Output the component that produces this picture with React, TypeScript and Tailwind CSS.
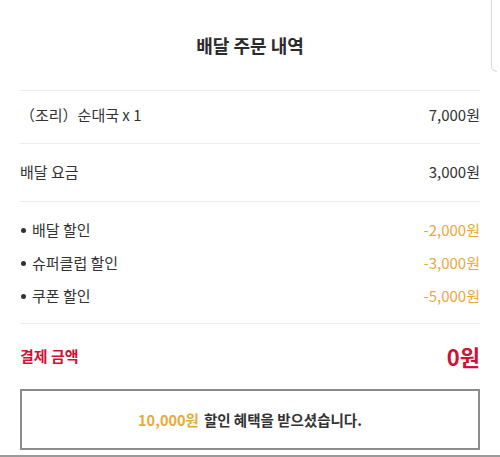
const Divider = () => <div className="h-px bg-[#ececec]" />

const Row = ({ label, value, className }: { label: string; value: string; className: string }) => (
    <div className={`flex items-center justify-between ${className}`}>
        <span>{label}</span>
        <span>{value}</span>
    </div>
)

const discounts = [
    { label: '배달 할인', value: '-2,000원' },
    { label: '슈퍼클럽 할인', value: '-3,000원' },
    { label: '쿠폰 할인', value: '-5,000원' },
]

export default function App() {
    return (
        <div
            className="relative w-[500px] h-[457px] overflow-hidden bg-white text-[#333] text-[15px]"
            style={{ fontFamily: '"Noto Sans CJK KR", "Noto Sans", sans-serif' }}
        >
            <div className="px-5">
                <div className="h-[90px] flex items-center justify-center text-[18px] font-bold text-[#2b2b2b]">
                    배달 주문 내역
                </div>
                <Divider />
                <Row className="h-[52px] pb-[4px]" label="（조리）순대국 x 1" value="7,000원" />
                <Divider />
                <Row className="h-[57px]" label="배달 요금" value="3,000원" />
                <Divider />
                <div className="pt-[12px] pb-[10px]">
                    {discounts.map((d) => (
                        <div key={d.label} className="h-[33px] flex items-center justify-between">
                            <span className="flex items-center gap-[6px]">
                                <span className="w-[5px] h-[5px] rounded-full bg-[#333] ml-px" />
                                {d.label}
                            </span>
                            <span className="text-[#eaa93c]">{d.value}</span>
                        </div>
                    ))}
                </div>
                <Divider />
                <div className="h-[65px] flex items-center justify-between text-[#cf1136] font-bold">
                    <span className="text-[15px]">결제 금액</span>
                    <span className="text-[22px]">0원</span>
                </div>
                <div className="h-[61px] border-2 border-[#8c8c8c] flex items-center justify-center font-bold text-[14.5px]">
                    <span className="text-[#eaa93c]">10,000원</span>
                    <span className="ml-[5px]">할인 혜택을 받으셨습니다.</span>
                </div>
            </div>
            <div className="mt-[5px] h-[2px] bg-[#9a9a9a]" />
            <div className="absolute right-[3px] top-[-4px] w-[6px] h-[76px] border-l border-b border-[#dcdcdc] rounded-bl-[6px]" />
        </div>
    )
}
